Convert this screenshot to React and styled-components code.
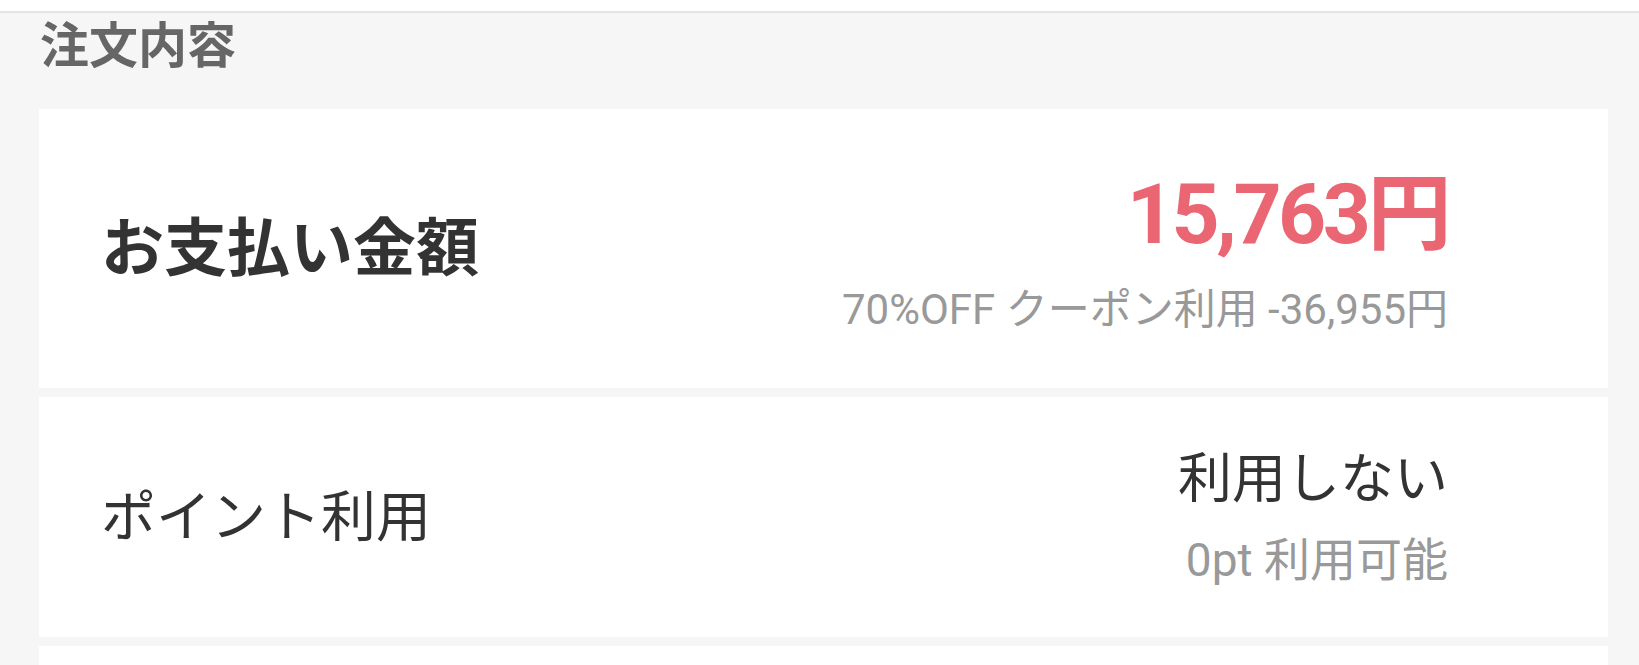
import React from "react";
import styled, { createGlobalStyle } from "styled-components";

const GlobalStyle = createGlobalStyle`
  html, body {
    margin: 0;
    padding: 0;
    background: #f6f6f6;
  }
  body {
    font-family: Roboto, "Noto Sans CJK JP", sans-serif;
    -webkit-font-smoothing: antialiased;
  }
`;

const Page = styled.div`
  min-height: 100vh;
  background: #f6f6f6;
  overflow: hidden;
`;

const TopBar = styled.div`
  height: 11px;
  background: #fff;
  border-bottom: 2px solid #e4e4e4;
`;

const Section = styled.section`
  padding: 0 31px 0 39px;
`;

const SectionTitle = styled.h2`
  margin: 0;
  height: 96px;
  padding: 4px 0 0 1px;
  box-sizing: border-box;
  font-size: 49px;
  line-height: 60px;
  font-weight: 700;
  color: #666;
`;

const CardList = styled.div`
  display: flex;
  flex-direction: column;
  gap: 9px;
`;

const Card = styled.div`
  display: flex;
  align-items: center;
  justify-content: space-between;
  box-sizing: border-box;
  min-height: ${(p) => p.$height}px;
  padding: 0 160px 0 62px;
  background: #fff;
`;

const Label = styled.div`
  font-size: ${(p) => (p.$strong ? 63 : 55)}px;
  font-weight: ${(p) => (p.$strong ? 700 : 400)};
  color: #333;
  line-height: 1.2;
`;

const Values = styled.div`
  display: flex;
  flex-direction: column;
  align-items: flex-end;
  padding-top: ${(p) => p.$offset || 0}px;
`;

const Price = styled.div`
  font-size: 84px;
  font-weight: 700;
  color: #eb6673;
  line-height: 1.1;
  letter-spacing: -3.5px;
`;

const MainValue = styled.div`
  font-size: 54px;
  color: #333;
  line-height: 1.25;
`;

const Note = styled.div`
  margin-top: ${(p) => p.$gap}px;
  font-size: ${(p) => p.$size}px;
  color: #999;
  line-height: 1.2;
`;

export default function App() {
  return (
    <Page>
      <GlobalStyle />
      <TopBar />
      <Section>
        <SectionTitle>注文内容</SectionTitle>
        <CardList>
          <Card $height={279}>
            <Label $strong>お支払い金額</Label>
            <Values $offset={7}>
              <Price>15,763円</Price>
              <Note $gap={23} $size={42}>70%OFF クーポン利用 -36,955円</Note>
            </Values>
          </Card>
          <Card $height={240}>
            <Label>ポイント利用</Label>
            <Values>
              <MainValue>利用しない</MainValue>
              <Note $gap={20} $size={46}>0pt 利用可能</Note>
            </Values>
          </Card>
          <Card $height={120} />
        </CardList>
      </Section>
    </Page>
  );
}
